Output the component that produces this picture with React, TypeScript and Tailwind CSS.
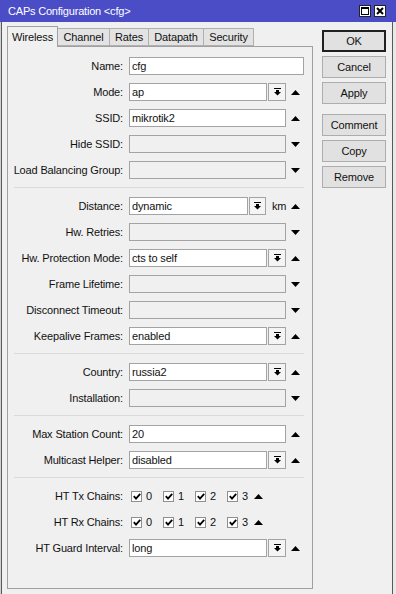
import React from "react";

function Tri({ up }: { up?: boolean }) {
  return (
    <svg width="9" height="5" viewBox="0 0 9 5" className="block">
      <path d={up ? "M0 5L4.5 0L9 5Z" : "M0 0H9L4.5 5Z"} fill="#000" />
    </svg>
  );
}

function DropBtn({ w = 18 }: { w?: number }) {
  return (
    <div
      className="ml-[1px] flex h-[18px] shrink-0 items-center justify-center border border-[#a3a3a3] bg-[#f4f4f4]"
      style={{ width: w }}
    >
      <svg width="7" height="8" viewBox="0 0 7 8" className="block">
        <rect x="0" y="0" width="7" height="1" fill="#000" />
        <rect x="2" y="2" width="3" height="2" fill="#000" />
        <path d="M0 4H7L3.5 7.5Z" fill="#000" />
      </svg>
    </div>
  );
}

function Input({ value, w, disabled }: { value?: string; w: number; disabled?: boolean }) {
  return (
    <div
      className={
        "flex h-[18px] shrink-0 items-center border border-[#a3a3a3] px-[2px] whitespace-nowrap " +
        (disabled ? "bg-[#f0f0f0]" : "bg-white")
      }
      style={{ width: w }}
    >
      {value}
    </div>
  );
}

function Row({
  label,
  children,
  arrow,
}: {
  label: string;
  children: React.ReactNode;
  arrow?: "up" | "down";
}) {
  return (
    <div className="flex h-[26px] items-center">
      <div className="w-[115px] shrink-0 text-right whitespace-nowrap">{label}</div>
      <div className="ml-[6px] flex min-w-[157px] items-center">{children}</div>
      {arrow && (
        <div className="flex w-[18px] justify-center pl-[1px]">
          <Tri up={arrow === "up"} />
        </div>
      )}
    </div>
  );
}

function Sep() {
  return <div className="ml-[6px] mt-[4px] mb-[5px] h-px w-[290px] bg-[#dadada]" />;
}

function Check({ n }: { n: string }) {
  return (
    <div className="flex w-[32px] items-center">
      <div className="flex h-[11px] w-[11px] items-center justify-center border border-[#8f8f8f] bg-white">
        <svg width="8" height="7" viewBox="0 0 8 7" className="block">
          <path d="M0.8 3.2L3 5.6L7.2 0.8" stroke="#000" strokeWidth="1.8" fill="none" />
        </svg>
      </div>
      <span className="ml-[4px]">{n}</span>
    </div>
  );
}

function Chains({ label }: { label: string }) {
  return (
    <div className="flex h-[26px] items-center">
      <div className="w-[115px] shrink-0 text-right whitespace-nowrap">{label}</div>
      <div className="ml-[8px] flex items-center">
        <Check n="0" />
        <Check n="1" />
        <Check n="2" />
        <Check n="3" />
        <div className="-ml-[5px]">
          <Tri up />
        </div>
      </div>
    </div>
  );
}

function Btn({ children, def, cls = "" }: { children: React.ReactNode; def?: boolean; cls?: string }) {
  return (
    <div
      className={
        "flex h-[22px] w-[64px] items-center justify-center bg-[#e1e1e1] " +
        (def ? "border-2 border-[#202020] " : "border border-[#adadad] ") +
        cls
      }
    >
      {children}
    </div>
  );
}

export default function App() {
  return (
    <div className="relative h-[594px] w-[396px] overflow-hidden bg-[#f0f0f0] font-['Liberation_Sans',Arial,sans-serif] text-[11px] tracking-[-0.15px] text-[#111]">
      {/* title bar */}
      <div className="flex h-[22px] items-center bg-[#4b4dc7] pl-[8px] pr-[10px]">
        <span className="text-[11px] tracking-[-0.2px] text-white">CAPs Configuration &lt;cfg&gt;</span>
        <div className="ml-auto flex gap-[3px]">
          <div className="flex h-[12px] w-[12px] items-center justify-center border border-[#222] bg-white">
            <div className="h-[8px] w-[8px] border border-t-2 border-black" />
          </div>
          <div className="flex h-[12px] w-[12px] items-center justify-center border border-[#222] bg-white">
            <svg width="8" height="8" viewBox="0 0 8 8" className="block">
              <path d="M1 1L7 7M7 1L1 7" stroke="#000" strokeWidth="2" />
            </svg>
          </div>
        </div>
      </div>

      <div className="flex">
        {/* left */}
        <div className="pl-[7px] pt-[5px]">
          <div className="flex h-[19px] items-end">
            <div className="relative z-10 -mb-px flex h-[21px] w-[51px] items-center justify-center border border-b-0 border-[#a0a0a0] bg-[#f0f0f0]">
              Wireless
            </div>
            <div className="flex h-[18px] w-[52px] items-center justify-center border border-l-0 border-[#b0b0b0] bg-[#e3e3e3]">Channel</div>
            <div className="flex h-[18px] w-[39px] items-center justify-center border border-l-0 border-[#b0b0b0] bg-[#e3e3e3]">Rates</div>
            <div className="flex h-[18px] w-[55px] items-center justify-center border border-l-0 border-[#b0b0b0] bg-[#e3e3e3]">Datapath</div>
            <div className="flex h-[18px] w-[50px] items-center justify-center border border-l-0 border-[#b0b0b0] bg-[#e3e3e3]">Security</div>
          </div>
          <div className="h-[543px] w-[306px] border border-[#a0a0a0] bg-[#f0f0f0] pt-[6px]">
            <Row label="Name:">
              <Input value="cfg" w={175} />
            </Row>
            <Row label="Mode:" arrow="up">
              <Input value="ap" w={138} />
              <DropBtn />
            </Row>
            <Row label="SSID:" arrow="up">
              <Input value="mikrotik2" w={157} />
            </Row>
            <Row label="Hide SSID:" arrow="down">
              <Input w={157} disabled />
            </Row>
            <Row label="Load Balancing Group:" arrow="down">
              <Input w={157} disabled />
            </Row>
            <Sep />
            <Row label="Distance:" arrow="up">
              <Input value="dynamic" w={119} />
              <DropBtn w={17} />
              <span className="ml-[6px]">km</span>
            </Row>
            <Row label="Hw. Retries:" arrow="down">
              <Input w={157} disabled />
            </Row>
            <Row label="Hw. Protection Mode:" arrow="up">
              <Input value="cts to self" w={138} />
              <DropBtn />
            </Row>
            <Row label="Frame Lifetime:" arrow="down">
              <Input w={157} disabled />
            </Row>
            <Row label="Disconnect Timeout:" arrow="down">
              <Input w={157} disabled />
            </Row>
            <Row label="Keepalive Frames:" arrow="up">
              <Input value="enabled" w={138} />
              <DropBtn />
            </Row>
            <Sep />
            <Row label="Country:" arrow="up">
              <Input value="russia2" w={138} />
              <DropBtn />
            </Row>
            <Row label="Installation:" arrow="down">
              <Input w={157} disabled />
            </Row>
            <Sep />
            <Row label="Max Station Count:" arrow="up">
              <Input value="20" w={157} />
            </Row>
            <Row label="Multicast Helper:" arrow="up">
              <Input value="disabled" w={138} />
              <DropBtn />
            </Row>
            <Sep />
            <Chains label="HT Tx Chains:" />
            <Chains label="HT Rx Chains:" />
            <Row label="HT Guard Interval:" arrow="up">
              <Input value="long" w={138} />
              <DropBtn />
            </Row>
          </div>
        </div>

        {/* right buttons */}
        <div className="ml-[9px] flex flex-col pt-[8px]">
          <Btn def>OK</Btn>
          <Btn cls="mt-[4px]">Cancel</Btn>
          <Btn cls="mt-[4px]">Apply</Btn>
          <Btn cls="mt-[10px]">Comment</Btn>
          <Btn cls="mt-[4px]">Copy</Btn>
          <Btn cls="mt-[4px]">Remove</Btn>
        </div>
      </div>

      {/* window edges */}
      <div className="absolute left-0 top-[22px] h-[572px] w-[2px] border-r border-[#5a5a5a] bg-[#d0d0d0]" />
      <div className="absolute right-0 top-[22px] h-[572px] w-[4px] border-l border-[#5a5a5a] bg-[#e8e8e8]" />
    </div>
  );
}
